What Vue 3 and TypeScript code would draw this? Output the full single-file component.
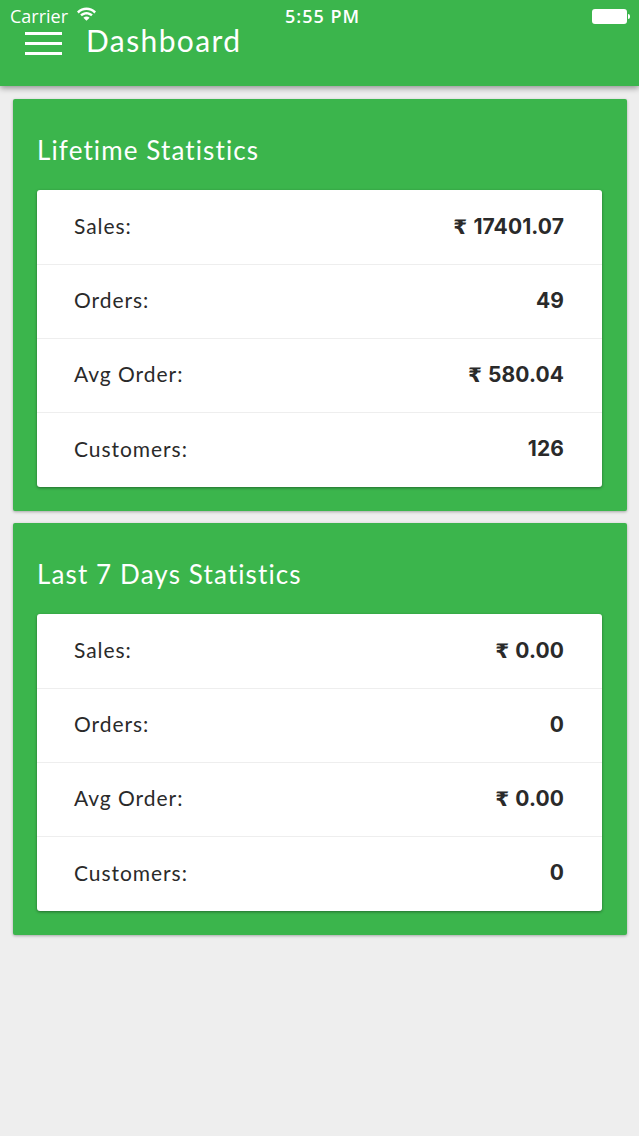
<script setup lang="ts">
interface Row { label: string; value: string; rupee: boolean }
interface Section { title: string; rows: Row[] }
const sections: Section[] = [
  { title: 'Lifetime Statistics', rows: [
    { label: 'Sales:', value: '17401.07', rupee: true },
    { label: 'Orders:', value: '49', rupee: false },
    { label: 'Avg Order:', value: '580.04', rupee: true },
    { label: 'Customers:', value: '126', rupee: false },
  ] },
  { title: 'Last 7 Days Statistics', rows: [
    { label: 'Sales:', value: '0.00', rupee: true },
    { label: 'Orders:', value: '0', rupee: false },
    { label: 'Avg Order:', value: '0.00', rupee: true },
    { label: 'Customers:', value: '0', rupee: false },
  ] },
]
</script>

<template>
  <div class="page">
    <header class="header">
      <div class="status">
        <div class="status-left">
          <span>Carrier</span>
          <svg class="wifi" width="19" height="14" viewBox="0 0 19 14">
            <path d="M0 4.6C5.4 -0.8 13.6 -0.8 19 4.6L17.3 6.4C12.8 2 6.2 2 1.7 6.4Z" fill="#fff"/>
            <path d="M3.2 7.6C6.8 4.2 12.2 4.2 15.8 7.6L14.1 9.3C11.3 6.8 7.7 6.8 4.9 9.3Z" fill="#fff"/>
            <path d="M6.4 10.7C8.2 9.2 10.8 9.2 12.6 10.7L9.5 13.8Z" fill="#fff"/>
          </svg>
        </div>
        <span class="time">5:55 PM</span>
        <div class="battery"><span class="battery-fill"></span><span class="battery-tip"></span></div>
      </div>
      <div class="nav">
        <div class="burger"><span></span><span></span><span></span></div>
        <span class="title">Dashboard</span>
      </div>
    </header>
    <main class="content">
      <section v-for="s in sections" :key="s.title" class="card">
        <h2 class="card-title">{{ s.title }}</h2>
        <div class="list">
          <div v-for="r in s.rows" :key="r.label" class="row">
            <span class="label">{{ r.label }}</span>
            <span class="value"><span v-if="r.rupee" class="rupee">₹</span>{{ r.value }}</span>
          </div>
        </div>
      </section>
    </main>
  </div>
</template>

<style>
html, body { margin: 0; background: #eeeeee; }
</style>

<style scoped>
.page {
  width: 639px;
  height: 1136px;
  overflow: hidden;
  background: #eeeeee;
  font-family: Lato, "Open Sans", "DejaVu Sans", sans-serif;
}
.header {
  height: 86px;
  background: #3bb54c;
  box-shadow: 0 2px 6px rgba(0, 0, 0, 0.4);
  color: #fff;
  box-sizing: border-box;
}
.status {
  height: 32px;
  display: grid;
  grid-template-columns: 1fr auto 1fr;
  align-items: center;
  padding: 0 10px;
  font-family: "Open Sans", sans-serif;
  font-size: 18px;
}
.status-left { display: flex; align-items: center; gap: 9px; }
.wifi { margin-top: -4px; }
.time { font-weight: 600; font-size: 18px; letter-spacing: 1px; margin-left: 6px; }
.battery { justify-self: end; display: flex; align-items: center; margin-right: -1px; }
.battery-fill {
  width: 33px;
  height: 13px;
  background: #fff;
  border: 1px solid rgba(255, 255, 255, 0.6);
  border-radius: 3px;
}
.battery-tip { width: 2px; height: 5px; background: #fff; margin-left: 1px; border-radius: 0 2px 2px 0; }
.nav { display: flex; align-items: center; height: 22px; padding-left: 25px; }
.burger { display: flex; flex-direction: column; gap: 7px; width: 37px; margin-right: 24px; }
.burger span { height: 3px; background: #fff; }
.title { font-size: 30px; letter-spacing: 1.4px; font-weight: 400; line-height: 22px; margin-top: -6px; }
.content { padding: 13px 12px 0 13px; display: flex; flex-direction: column; gap: 12px; }
.card {
  height: 412px;
  box-sizing: border-box;
  background: #3bb54c;
  border-radius: 2px;
  box-shadow: 0 1px 3px rgba(0, 0, 0, 0.3);
  padding: 0 25px 0 24px;
  display: flex;
  flex-direction: column;
}
.card-title {
  margin: 0;
  height: 91px;
  line-height: 102px;
  font-size: 26px;
  font-weight: 400;
  letter-spacing: 1.12px;
  color: #fff;
}
.list {
  background: #fff;
  border-radius: 3px;
  box-shadow: 0 1px 3px rgba(0, 0, 0, 0.4);
}
.row {
  height: 74px;
  box-sizing: border-box;
  display: flex;
  justify-content: space-between;
  align-items: center;
  padding: 0 38px 4px 37px;
  border-bottom: 1px solid #eeeeee;
  color: #2a2a2a;
  font-size: 21px;
}
.row:first-child { height: 75px; padding-bottom: 3px; }
.row:last-child { border-bottom: 0; }
.label { letter-spacing: 0.95px; }
.value { font-family: Inter, sans-serif; font-weight: 700; font-size: 21px; letter-spacing: 0.1px; margin-top: 1px; }
.rupee { margin-right: 6px; font-family: "DejaVu Sans", sans-serif; font-size: 20px; }
</style>
